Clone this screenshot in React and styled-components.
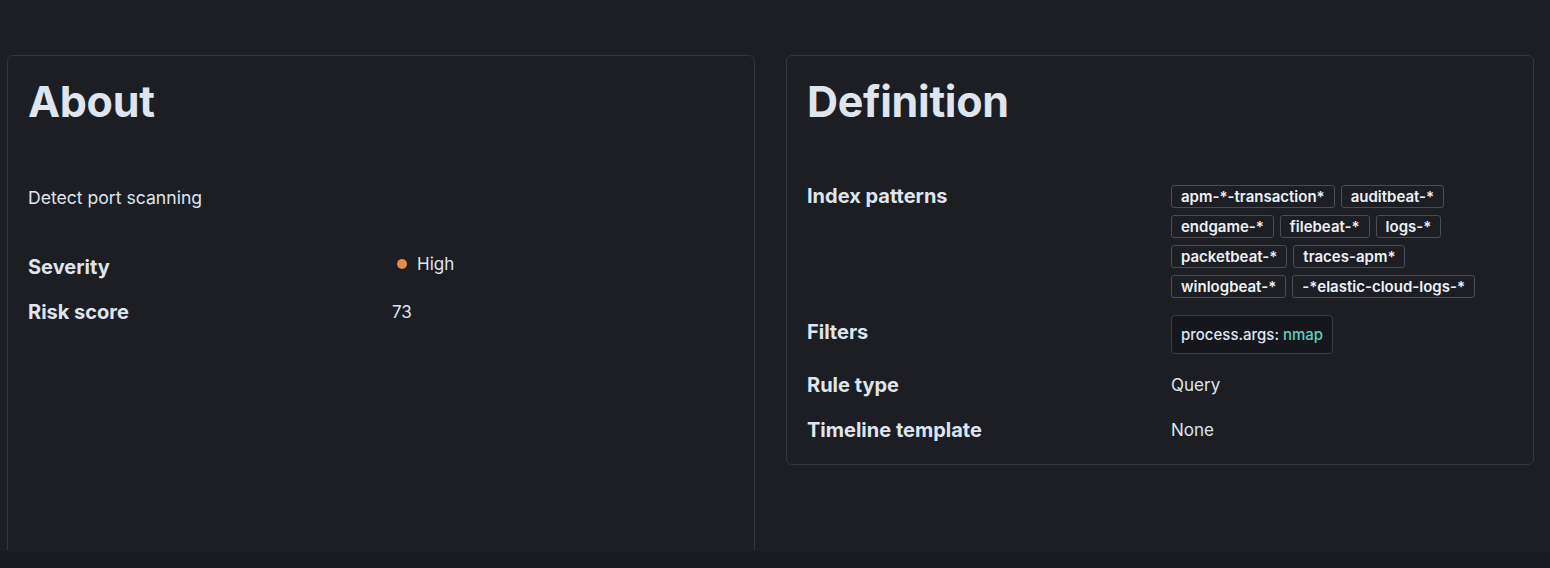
import React from "react";
import styled, { createGlobalStyle } from "styled-components";

const GlobalStyle = createGlobalStyle`
  html, body {
    margin: 0;
    padding: 0;
    background: #1d1e24;
  }
  body {
    font-family: Inter, "Noto Sans", sans-serif;
    color: #dfe5ef;
  }
`;

const Page = styled.div`
  height: 568px;
  display: flex;
  flex-direction: column;
  overflow: hidden;
`;

const Main = styled.div`
  height: 550px;
  overflow: hidden;
  display: flex;
  align-items: flex-start;
  gap: 31px;
  padding: 55px 16px 0 7px;
  box-sizing: border-box;
`;

const Footer = styled.div`
  flex: 1;
  background: #1b1c21;
  border-top: 1px solid #202127;
`;

const Card = styled.section`
  width: 748px;
  box-sizing: border-box;
  border: 1px solid #33353d;
  border-radius: 6px;
  padding: 20px 20px 20px;
  min-height: ${(p) => (p.$tall ? "600px" : "auto")};
`;

const Title = styled.h2`
  margin: 0 0 56px;
  font-size: 43px;
  line-height: 50px;
  font-weight: 700;
  letter-spacing: -0.3px;
  color: #dfe5ef;
`;

const Description = styled.p`
  margin: 0 0 39px;
  font-size: 17.6px;
  line-height: 32px;
`;

const List = styled.dl`
  margin: 0;
  display: grid;
  grid-template-columns: 364px 1fr;
  align-items: center;
  row-gap: 17px;
`;

const Term = styled.dt`
  font-size: 20px;
  font-weight: 700;
  line-height: 28px;
  align-self: ${(p) => (p.$offset !== undefined ? "start" : "center")};
  padding-top: ${(p) => p.$offset || 0}px;
`;

const Value = styled.dd`
  margin: 0;
  font-size: 17px;
  line-height: ${(p) => (p.$raised ? "22px" : "28px")};
  display: flex;
  align-items: center;
  flex-wrap: wrap;
  align-self: ${(p) => (p.$raised || p.$badges ? "start" : "center")};
  gap: ${(p) => (p.$badges ? "7px 6px" : "0")};
  padding: ${(p) => (p.$badges ? "3px 20px 0 0" : "0 20px 0 0")};
`;

const Dot = styled.span`
  width: 10px;
  height: 10px;
  border-radius: 50%;
  background: #e08c4a;
  margin: 0 10px 0 5px;
`;

const Badge = styled.span`
  box-sizing: border-box;
  border: 1px solid #4a4c55;
  border-radius: 3px;
  padding: 0 9px;
  height: 23px;
  line-height: 21px;
  font-size: 15px;
  font-weight: 600;
  color: #eef1f7;
`;

const QueryBox = styled.div`
  background: #16171c;
  border: 1px solid #3a3c44;
  border-radius: 4px;
  padding: 8px 9px;
  font-size: 15px;
  line-height: 21px;
  font-weight: 500;
`;

const Match = styled.span`
  color: #5fcfbf;
`;

const patterns = [
  "apm-*-transaction*",
  "auditbeat-*",
  "endgame-*",
  "filebeat-*",
  "logs-*",
  "packetbeat-*",
  "traces-apm*",
  "winlogbeat-*",
  "-*elastic-cloud-logs-*",
];

export default function App() {
  return (
    <Page>
      <GlobalStyle />
      <Main>
        <Card $tall>
          <Title>About</Title>
          <Description>Detect port scanning</Description>
          <List>
            <Term>Severity</Term>
            <Value $raised>
              <Dot />
              High
            </Value>
            <Term>Risk score</Term>
            <Value>73</Value>
          </List>
        </Card>
        <Card>
          <Title>Definition</Title>
          <List>
            <Term $offset={0}>Index patterns</Term>
            <Value $badges>
              {patterns.map((p) => (
                <Badge key={p}>{p}</Badge>
              ))}
            </Value>
            <Term $offset={3}>Filters</Term>
            <Value>
              <QueryBox>
                process.args: <Match>nmap</Match>
              </QueryBox>
            </Value>
            <Term>Rule type</Term>
            <Value>Query</Value>
            <Term>Timeline template</Term>
            <Value>None</Value>
          </List>
        </Card>
      </Main>
      <Footer />
    </Page>
  );
}
